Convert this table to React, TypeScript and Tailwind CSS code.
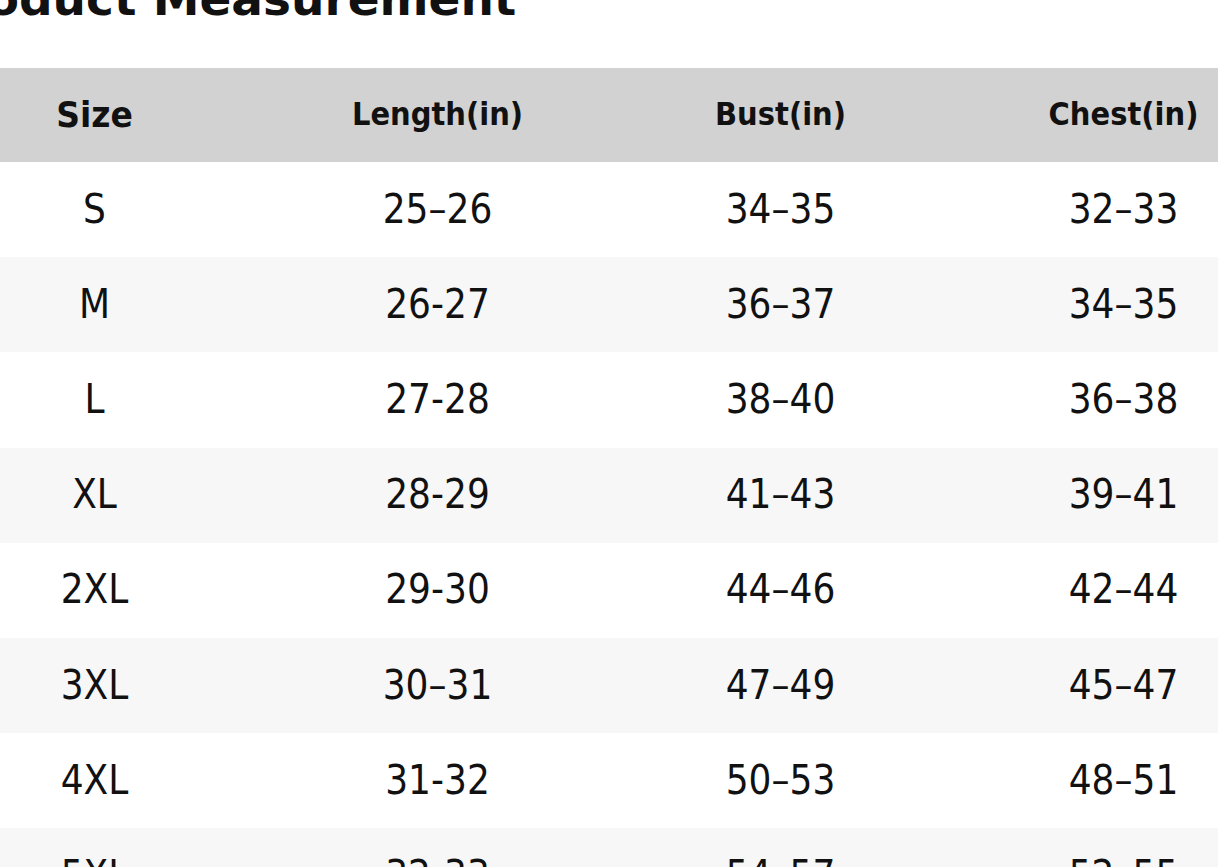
const headers = ["Size", "Length(in)", "Bust(in)", "Chest(in)"];

const rows = [
  ["S", "25–26", "34–35", "32–33"],
  ["M", "26-27", "36–37", "34–35"],
  ["L", "27-28", "38–40", "36–38"],
  ["XL", "28-29", "41–43", "39–41"],
  ["2XL", "29-30", "44–46", "42–44"],
  ["3XL", "30–31", "47–49", "45–47"],
  ["4XL", "31-32", "50–53", "48–51"],
  ["5XL", "32-33", "54–57", "52–55"],
];

export default function App() {
  return (
    <div className="h-[867px] w-[1218px] overflow-hidden bg-white text-[#111] font-['DejaVu_Sans',sans-serif]">
      <div className="-ml-[77px] w-[1372px]">
        {/* Title */}
        <h2 className="-mt-[25px] mb-[46px] pl-[6px] text-[47px] font-bold leading-none">Product Measurement</h2>

        {/* Table */}
        <table className="w-full table-fixed border-collapse">
          <thead>
            <tr className="h-[94px] bg-[#d2d2d2]">
              {headers.map((h, i) => (
                <th
                  key={h}
                  className={i === 0 ? "w-[343px] text-center text-[33px] font-bold" : "w-[343px] text-center text-[29px] font-bold"}
                >
                  <span className="inline-block scale-y-[1.08]">{h}</span>
                </th>
              ))}
            </tr>
          </thead>
          <tbody>
            {rows.map((r, i) => (
              <tr key={r[0]} className={i % 2 === 0 ? "h-[95.2px] bg-white" : "h-[95.2px] bg-[#f7f7f7]"}>
                {r.map((c, j) => (
                  <td key={j} className="text-center text-[36px] font-normal">
                    <span className="inline-block scale-y-[1.12]">{c}</span>
                  </td>
                ))}
              </tr>
            ))}
          </tbody>
        </table>
      </div>
    </div>
  );
}
